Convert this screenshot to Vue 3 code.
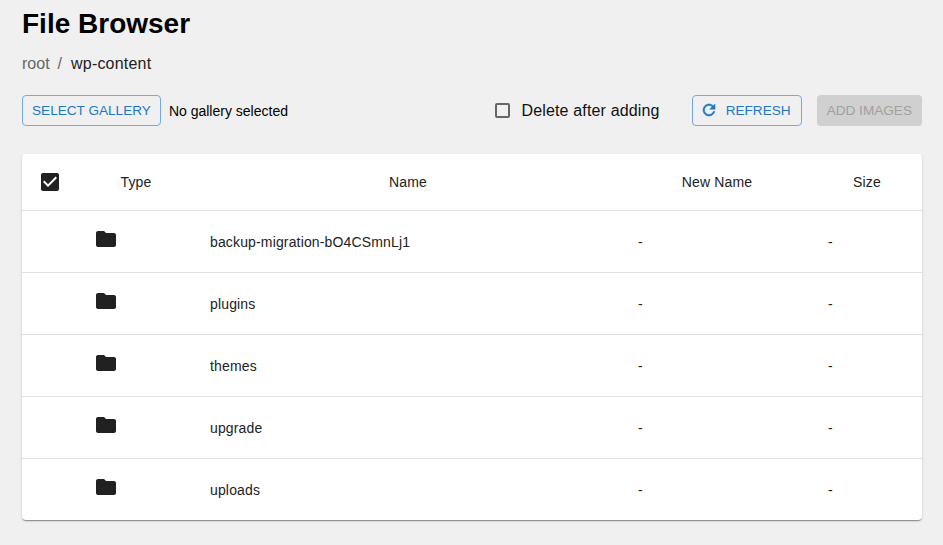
<template>
  <div class="page">
    <h1 class="title">File Browser</h1>

    <nav class="crumbs">
      <span class="crumb-link">root</span>
      <span class="crumb-sep">/</span>
      <span class="crumb-current">wp-content</span>
    </nav>

    <div class="toolbar">
      <button class="btn btn-outline select-btn">Select Gallery</button>
      <span class="gallery-label">No gallery selected</span>

      <label class="delete-option">
        <span class="box"></span>
        <span>Delete after adding</span>
      </label>

      <button class="btn btn-outline refresh-btn">
        <svg class="refresh-icon" viewBox="0 0 24 24" width="18" height="18">
          <path fill="#1e78c2" stroke="#1e78c2" stroke-width="0.7" d="M17.65 6.35C16.2 4.9 14.21 4 12 4c-4.42 0-7.99 3.58-7.99 8s3.57 8 7.99 8c3.73 0 6.84-2.55 7.73-6h-2.08c-.82 2.33-3.04 4-5.65 4-3.31 0-6-2.69-6-6s2.69-6 6-6c1.66 0 3.14.69 4.22 1.78L13 11h7V4l-2.35 2.35z" />
        </svg>
        Refresh
      </button>
      <button class="btn btn-disabled" disabled>Add Images</button>
    </div>

    <div class="card">
      <div class="row head">
        <div class="cell check-cell">
          <svg viewBox="0 0 24 24" width="24" height="24">
            <path fill="#212121" d="M19 3H5c-1.11 0-2 .9-2 2v14c0 1.1.89 2 2 2h14c1.11 0 2-.9 2-2V5c0-1.1-.89-2-2-2zm-9 14l-5-5 1.41-1.41L10 14.17l7.59-7.59L19 8l-9 9z" />
          </svg>
        </div>
        <div class="cell center">Type</div>
        <div class="cell center">Name</div>
        <div class="cell center">New Name</div>
        <div class="cell center">Size</div>
      </div>

      <div v-for="folder in folders" :key="folder" class="row">
        <div class="cell"></div>
        <div class="cell icon-cell">
          <svg viewBox="2 4 20 16" width="20" height="16">
            <path fill="#212121" d="M10 4H4c-1.1 0-2 .9-2 2v12c0 1.1.9 2 2 2h16c1.1 0 2-.9 2-2V8c0-1.1-.9-2-2-2h-8l-2-2z" />
          </svg>
        </div>
        <div class="cell">{{ folder }}</div>
        <div class="cell">-</div>
        <div class="cell">-</div>
      </div>
    </div>
  </div>
</template>

<script setup>
const folders = ['backup-migration-bO4CSmnLj1', 'plugins', 'themes', 'upgrade', 'uploads'];
</script>

<style>
html,
body {
  background: #f0f0f0;
}
</style>

<style scoped>
.page {
  padding: 6px 21px 24px 22px;
  font-family: "Liberation Sans", Arial, sans-serif;
  color: #000;
}

.title {
  margin: 0;
  font-size: 28px;
  line-height: 36px;
  font-weight: 700;
}

.crumbs {
  display: flex;
  gap: 8px;
  margin-top: 12px;
  font-size: 16px;
  line-height: 20px;
  color: #666;
}

.crumb-sep {
  margin-right: 1px;
}

.crumb-current {
  color: #222;
  letter-spacing: 0.2px;
}

.toolbar {
  display: flex;
  align-items: center;
  margin-top: 21px;
  height: 31px;
}

.btn {
  height: 31px;
  padding: 0 9px 1px;
  border-radius: 4px;
  font-family: inherit;
  font-size: 13.6px;
  text-transform: uppercase;
  white-space: nowrap;
}

.btn-outline {
  border: 1px solid #75abe0;
  background: transparent;
  color: #1e78c2;
}

.gallery-label {
  margin-left: 8px;
  font-size: 14px;
}

.delete-option {
  display: flex;
  align-items: center;
  gap: 11px;
  margin-left: auto;
  font-size: 16px;
  letter-spacing: 0.16px;
  color: #111;
}

.box {
  width: 11px;
  height: 11px;
  border: 2px solid #666;
  border-radius: 2px;
}

.refresh-btn {
  display: flex;
  align-items: center;
  gap: 8px;
  margin-left: 32px;
  padding-right: 10px;
}

.refresh-icon {
  margin-left: -2px;
}

.btn-disabled {
  margin-left: 15px;
  padding: 0 10px 1px;
  border: none;
  background: #d0d0d0;
  color: #a0a0a0;
}

.card {
  margin-top: 28px;
  background: #fff;
  border-radius: 4px;
  box-shadow: 0 2px 1px -1px rgba(0, 0, 0, 0.25), 0 1px 1px 0 rgba(0, 0, 0, 0.16), 0 1px 3px 0 rgba(0, 0, 0, 0.12);
}

.row {
  display: grid;
  grid-template-columns: 56px 116px 428px 190px 110px;
  height: 62px;
  border-top: 1px solid #e0e0e0;
  box-sizing: border-box;
}

.head {
  height: 56px;
  border-top: none;
}

.cell {
  display: flex;
  align-items: center;
  padding-left: 16px;
  font-size: 14px;
  letter-spacing: 0.15px;
  color: #222;
}

.center {
  justify-content: center;
  padding-left: 0;
}

.check-cell {
  padding-left: 16px;
}

.icon-cell {
  padding-left: 18px;
  padding-bottom: 6px;
}
</style>
